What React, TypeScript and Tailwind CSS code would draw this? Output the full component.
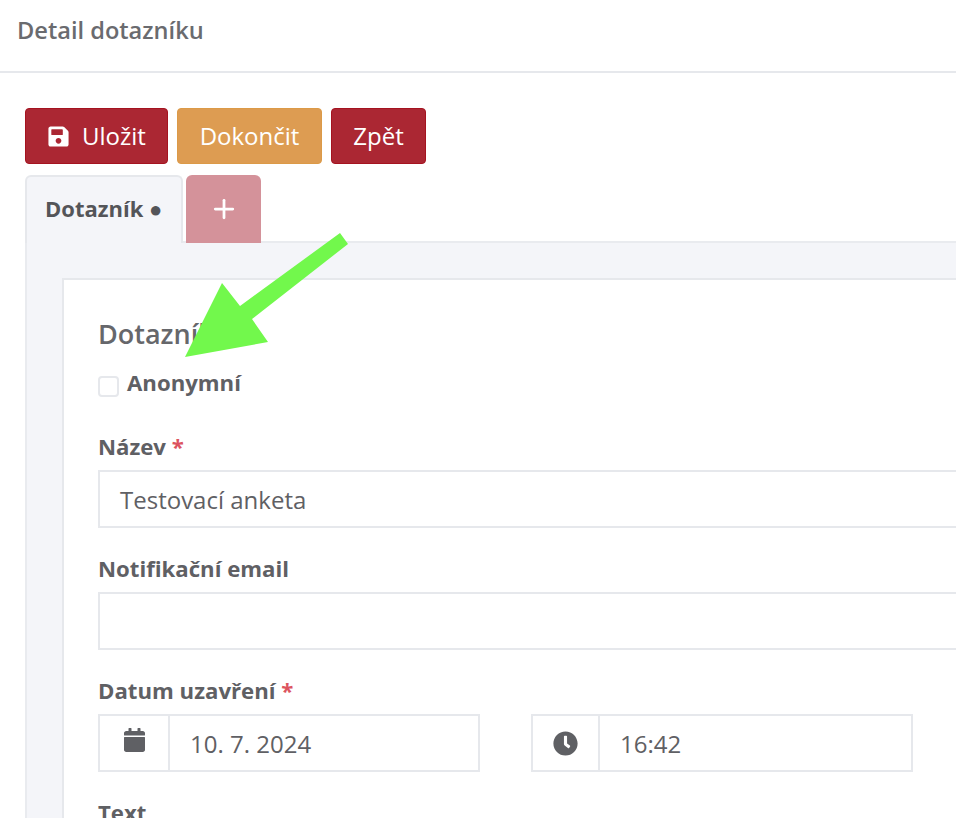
import { Plus } from 'lucide-react';
import { FaSave, FaCalendar, FaClock } from 'react-icons/fa';

function Label({ text, required, className }: { text: string; required?: boolean; className?: string }) {
  return (
    <div className={`h-[26px] text-[22.2px] leading-[26px] font-bold text-[#5f6064] ${className ?? ''}`}>
      {text}
      {required && <span className="text-[#dc5460]"> *</span>}
    </div>
  );
}

function Input({ value }: { value?: string }) {
  return (
    <div className="mt-[10px] h-[58px] w-[900px] border-2 border-[#e6e8ec] bg-white px-[20px] text-[24px] leading-[56px] text-[#5f6064]">
      {value}
    </div>
  );
}

function AddonInput({ icon, value, addonWidth, width }: { icon: React.ReactNode; value: string; addonWidth: string; width: string }) {
  return (
    <div className={`flex h-[58px] border-2 border-[#e6e8ec] bg-white text-[#5f6064] ${width}`}>
      <div className={`flex items-center justify-center border-r-2 border-[#e6e8ec] ${addonWidth}`}>{icon}</div>
      <div className="px-[20px] text-[24px] leading-[56px]">{value}</div>
    </div>
  );
}

export default function App() {
  return (
    <div className="relative h-[818px] w-[956px] overflow-hidden bg-white font-['Open_Sans',sans-serif]">
      {/* Header */}
      <div className="flex h-[73px] items-start border-b-2 border-[#e6e8ec] pl-[17px] pt-[14px] text-[23.6px] leading-[32px] font-semibold text-[#6a6b6f]">
        Detail dotazníku
      </div>

      <div className="pl-[25px] pt-[35px]">
        {/* Buttons */}
        <div className="flex gap-[9px]">
          <button className="flex h-[56px] w-[143px] items-center justify-center gap-[12px] rounded-[4px] border border-[#a51320] bg-[#ab2733] text-[24px] text-white">
            <FaSave className="h-[23px] w-[23px]" />
            Uložit
          </button>
          <button className="h-[56px] w-[145px] rounded-[4px] border border-[#dc9a47] bg-[#dd9c52] text-[24px] text-white">
            Dokončit
          </button>
          <button className="h-[56px] w-[95px] rounded-[4px] border border-[#a51320] bg-[#ab2733] text-[24px] text-white">
            Zpět
          </button>
        </div>

        {/* Tabs */}
        <div className="mt-[11px] flex h-[66px] gap-[3px]">
          <div className="z-10 h-[68px] w-[158px] rounded-t-[6px] border-2 border-b-0 border-[#e6e8ec] bg-[#f4f5f9] pl-[18px] pt-[16px] text-[22px] leading-[30px] font-bold whitespace-nowrap text-[#545559]">
            Dotazník ●
          </div>
          <div className="flex h-[68px] w-[75px] items-center justify-center rounded-t-[6px] bg-[#d4929a] text-white">
            <Plus className="h-[30px] w-[30px]" strokeWidth={2.2} />
          </div>
        </div>

        {/* Panel */}
        <div className="w-[931px] border-t-2 border-l-2 border-[#e9ebef] bg-[#f4f5f9] pl-[35px] pt-[35px]">
          <div className="h-[600px] border-t-2 border-l-2 border-[#e6e8ec] bg-white pl-[34px] pt-[36px]">
            <div className="h-[36px] text-[27px] leading-[36px] font-semibold text-[#66676b]">Dotazník</div>
            <div className="mt-[18px] flex h-[26px] items-center gap-[8px]">
              <div className="mt-[6px] h-[21px] w-[21px] rounded-[4px] border-2 border-[#e6e8ec] bg-white" />
              <span className="text-[22.2px] leading-[26px] font-bold text-[#5f6064]">Anonymní</span>
            </div>

            <Label text="Název" required className="mt-[38px]" />
            <Input value="Testovací anketa" />

            <Label text="Notifikační email" className="mt-[28px]" />
            <Input />

            <Label text="Datum uzavření" required className="mt-[28px]" />
            <div className="mt-[10px] flex gap-[51px]">
              <AddonInput icon={<FaCalendar className="mb-[6px] h-[24px] w-[21px]" />} value="10. 7. 2024" addonWidth="w-[70px]" width="w-[382px]" />
              <AddonInput icon={<FaClock className="h-[25px] w-[25px]" />} value="16:42" addonWidth="w-[67px]" width="w-[382px]" />
            </div>

            <Label text="Text" className="mt-[28px]" />
          </div>
        </div>
      </div>

      {/* Green annotation arrow */}
      <svg className="absolute top-0 left-0" width="956" height="818" viewBox="0 0 956 818" fill="none">
        <polygon points="340,233 348,244 252,319 268,342 185,357 222,283 240,306" fill="#72f84c" />
      </svg>
    </div>
  );
}
